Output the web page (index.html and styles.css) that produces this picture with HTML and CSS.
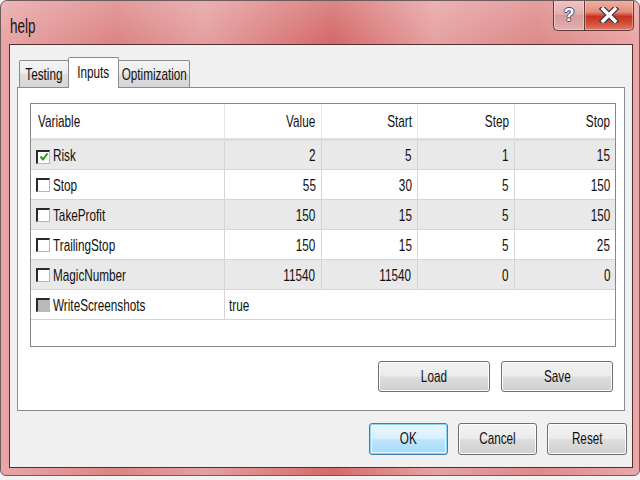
FILE: index.html
```html
<!DOCTYPE html>
<html>
<head>
<meta charset="utf-8">
<title>help</title>
<link rel="stylesheet" href="styles.css">
</head>
<body>
<div class="window">
  <div class="titlebar">
    <span class="title"><span class="t t-l">help</span></span>
    <div class="caption-btns">
      <div class="cap cap-help"><span class="cap-glyph">?</span></div>
      <div class="cap cap-close">
        <svg width="22" height="16" viewBox="0 0 22 16">
          <path d="M5 2 L17 14 M17 2 L5 14" stroke="#3a3a4a" stroke-width="6" stroke-linecap="square" fill="none"/>
          <path d="M5 2 L17 14 M17 2 L5 14" stroke="#ffffff" stroke-width="3.4" stroke-linecap="square" fill="none"/>
        </svg>
      </div>
    </div>
  </div>
  <div class="client">
    <div class="tabs">
      <div class="tab tab-testing"><span class="t">Testing</span></div>
      <div class="tab tab-active"><span class="t">Inputs</span></div>
      <div class="tab tab-opt"><span class="t">Optimization</span></div>
    </div>
    <div class="panel">
      <div class="listview">
        <table class="grid">
          <colgroup>
            <col class="c-var"><col class="c-num"><col class="c-num2"><col class="c-num"><col class="c-last">
          </colgroup>
          <thead>
            <tr><th class="left"><span class="t t-l">Variable</span></th><th><span class="t t-r">Value</span></th><th><span class="t t-r">Start</span></th><th><span class="t t-r">Step</span></th><th><span class="t t-r">Stop</span></th></tr>
          </thead>
          <tbody>
            <tr class="alt">
              <td class="var"><span class="chk chk-on"><svg width="10" height="10" viewBox="0 0 10 10"><path d="M1.5 4.5 L4 7.5 L8.5 1.5" stroke="#1f9a1f" stroke-width="2" fill="none"/></svg></span><span class="t t-l">Risk</span></td>
              <td><span class="t t-r">2</span></td><td><span class="t t-r">5</span></td><td><span class="t t-r">1</span></td><td><span class="t t-r">15</span></td>
            </tr>
            <tr>
              <td class="var"><span class="chk"></span><span class="t t-l">Stop</span></td>
              <td><span class="t t-r">55</span></td><td><span class="t t-r">30</span></td><td><span class="t t-r">5</span></td><td><span class="t t-r">150</span></td>
            </tr>
            <tr class="alt">
              <td class="var"><span class="chk"></span><span class="t t-l">TakeProfit</span></td>
              <td><span class="t t-r">150</span></td><td><span class="t t-r">15</span></td><td><span class="t t-r">5</span></td><td><span class="t t-r">150</span></td>
            </tr>
            <tr>
              <td class="var"><span class="chk"></span><span class="t t-l">TrailingStop</span></td>
              <td><span class="t t-r">150</span></td><td><span class="t t-r">15</span></td><td><span class="t t-r">5</span></td><td><span class="t t-r">25</span></td>
            </tr>
            <tr class="alt">
              <td class="var"><span class="chk"></span><span class="t t-l">MagicNumber</span></td>
              <td><span class="t t-r">11540</span></td><td><span class="t t-r">11540</span></td><td><span class="t t-r">0</span></td><td><span class="t t-r">0</span></td>
            </tr>
            <tr>
              <td class="var"><span class="chk chk-gray"></span><span class="t t-l">WriteScreenshots</span></td>
              <td class="left" colspan="4"><span class="t t-l">true</span></td>
            </tr>
          </tbody>
        </table>
      </div>
      <div class="panel-actions">
        <button class="btn btn-wide"><span class="t">Load</span></button>
        <button class="btn btn-wide"><span class="t">Save</span></button>
      </div>
    </div>
    <div class="dialog-actions">
      <button class="btn btn-default"><span class="t">OK</span></button>
      <button class="btn"><span class="t">Cancel</span></button>
      <button class="btn btn-reset"><span class="t">Reset</span></button>
    </div>
  </div>
</div>
</body>
</html>
```
FILE: styles.css
```css
* { box-sizing: border-box; }

html, body {
  margin: 0;
  padding: 0;
  width: 640px;
  height: 480px;
  background: #f2f2f2;
  overflow: hidden;
}

body {
  font-family: "Liberation Sans", Arial, sans-serif;
  font-size: 17px;
  color: #111;
}

/* the dialog text is tall and narrow: a horizontally condensed face */
.t {
  display: inline-block;
  transform: scaleX(0.69);
  transform-origin: center center;
  white-space: nowrap;
}
.t-l { transform-origin: left center; }
.t-r { transform-origin: right center; }

.window {
  width: 640px;
  height: 476px;
  border: 1px solid #6e5c5c;
  border-radius: 7px 7px 6px 6px;
  padding: 0 6px 7px 8px;
  display: flex;
  flex-direction: column;
  background:
    linear-gradient(180deg, rgba(255,255,255,0.18) 0%, rgba(255,255,255,0) 40px),
    linear-gradient(90deg, #e9a6a6 0%, #dc8585 18%, #e4a0a0 32%, #d56a6a 52%, #e6a2a2 68%, #de8a8a 84%, #eaa8a8 100%);
  overflow: hidden;
}

.titlebar {
  height: 43px;
  flex: none;
  display: flex;
  align-items: flex-start;
  justify-content: space-between;
}

.title {
  font-size: 21px;
  color: #151515;
  margin-top: 13px;
  margin-left: 1px;
}
.title .t { transform: scaleX(0.64); }

.caption-btns {
  display: flex;
  margin-right: -1px;
  margin-top: -1px;
}

.cap {
  height: 31px;
  border: 1px solid #5e3c3c;
  border-top: none;
  display: flex;
  align-items: center;
  justify-content: center;
}

.cap-help {
  width: 31px;
  border-radius: 0 0 0 5px;
  border-right: none;
  background: linear-gradient(180deg, #f0c6c6 0%, #e3acac 48%, #d79a9a 52%, #e2b0b0 100%);
  box-shadow: inset 0 0 0 1px rgba(255,255,255,0.35);
}

.cap-glyph {
  font-family: "Liberation Sans", sans-serif;
  font-weight: bold;
  font-size: 18px;
  color: #fff;
  text-shadow: 1px 0 #4a4a5a, -1px 0 #4a4a5a, 0 1px #4a4a5a, 0 -1px #4a4a5a;
}

.cap-close {
  width: 50px;
  border-radius: 0 0 5px 0;
  background: linear-gradient(180deg, #f0b4a6 0%, #e48a78 40%, #c8321f 55%, #d04a34 75%, #e27a66 100%);
  box-shadow: inset 0 0 0 1px rgba(255,220,210,0.45);
}

.client {
  flex: 1;
  border: 1px solid #4e3030;
  background: #f0f0f0;
  padding: 12px 7px 12px 7px;
  display: flex;
  flex-direction: column;
}

.tabs {
  display: flex;
  align-items: flex-end;
  height: 30px;
  padding-left: 2px;
}

.tab {
  height: 27px;
  border: 1px solid #898c95;
  border-bottom: none;
  background: linear-gradient(180deg, #f4f4f4 0%, #ececec 50%, #dedede 51%, #d6d6d6 100%);
  padding-top: 4px;
  display: flex;
  justify-content: center;
  align-items: flex-start;
  border-radius: 2px 2px 0 0;
  white-space: nowrap;
}

.tab-testing { width: 50px; margin-right: -1px; }
.tab-opt { width: 72px; margin-left: -1px; }

.tab-active {
  width: 51px;
  height: 31px;
  margin-bottom: -1px;
  position: relative;
  z-index: 1;
  background: #ffffff;
  padding-top: 5px;
}

.panel {
  height: 324px;
  border: 1px solid #898c95;
  background: #ffffff;
  padding: 15px 8px 0 12px;
  display: flex;
  flex-direction: column;
}

.listview {
  height: 244px;
  border: 1px solid #828790;
  background: #ffffff;
}

.grid {
  border-collapse: collapse;
  table-layout: fixed;
  width: 584px;
}

.c-var { width: 193px; }
.c-num { width: 97px; }
.c-num2 { width: 96px; }
.c-last { width: 101px; }

.grid th {
  height: 35px;
  font-weight: normal;
  text-align: right;
  padding: 3px 5px 0 6px;
  border-right: 1px solid #e5e5e5;
  border-bottom: 3px solid #dedede;
  background: #ffffff;
}

.grid th:last-child, .grid td:last-child { border-right: none; }

.grid td {
  height: 30px;
  text-align: right;
  padding: 3px 5px 0 4px;
  border-right: 1px solid #d5d5d5;
  border-bottom: 1px solid #d5d5d5;
  white-space: nowrap;
}

.grid .left { text-align: left; }
.grid th.left { padding-left: 7px; }

.grid tr.alt td { background: #e9e9e9; }

.grid td.var {
  text-align: left;
  padding-left: 5px;
}

.chk {
  display: inline-flex;
  align-items: center;
  justify-content: center;
  width: 14px;
  height: 14px;
  vertical-align: -1px;
  margin-right: 3px;
  background: #ffffff;
  border-top: 2px solid #2a2a2a;
  border-left: 2px solid #2a2a2a;
  border-right: 1px solid #b8b8b8;
  border-bottom: 1px solid #b8b8b8;
}

.chk-gray { background: #b9b9b9; }

.panel-actions {
  display: flex;
  justify-content: flex-end;
  gap: 11px;
  margin-top: 14px;
  margin-right: 3px;
}

.btn {
  font-family: "Liberation Sans", Arial, sans-serif;
  font-size: 17px;
  color: #111;
  height: 32px;
  width: 79px;
  border: 1px solid #707070;
  border-radius: 3px;
  padding: 0;
  display: flex;
  align-items: center;
  justify-content: center;
  background: linear-gradient(180deg, #f3f3f3 0%, #ebebeb 48%, #dddddd 52%, #cfcfcf 100%);
  box-shadow: inset 0 0 0 1px #fcfcfc;
}

.btn-wide { width: 112px; height: 31px; }

.dialog-actions {
  display: flex;
  justify-content: flex-end;
  gap: 10px;
  margin-top: 12px;
  margin-right: -2px;
}

.btn-reset { width: 80px; }

.btn-default {
  border-color: #3c7fb1;
  background: linear-gradient(180deg, #eaf6fd 0%, #d9f0fc 48%, #bee6fd 52%, #a7d9f5 100%);
  box-shadow: inset 0 0 0 1px #8fd3f7, inset 0 0 0 2px #e6f4fc;
}
```
